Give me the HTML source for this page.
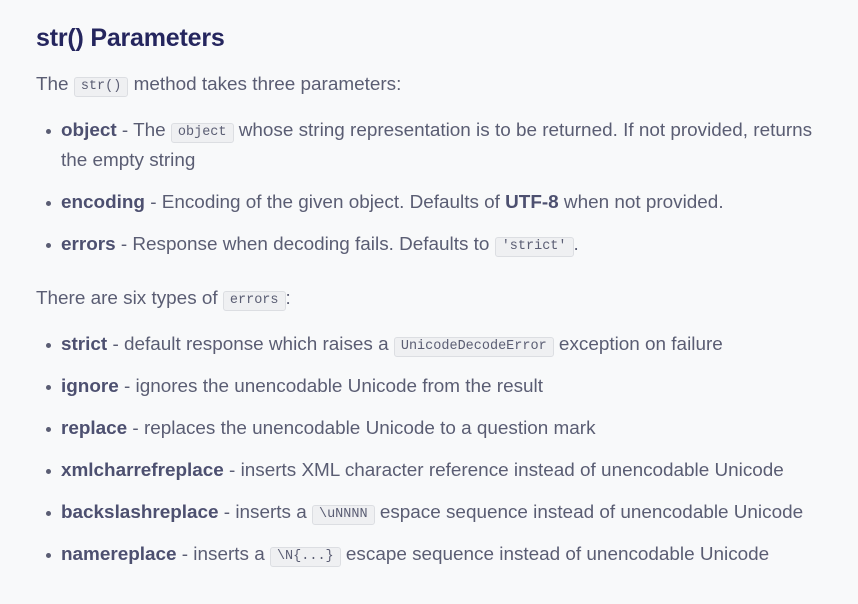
<!DOCTYPE html>
<html><head><meta charset="utf-8"><style>
html,body{margin:0;padding:0;background:#f8f9fa;width:858px;height:604px;overflow:hidden}
body{font-family:"Liberation Sans",sans-serif;color:#5a5d73;font-size:18.9px}
h2{position:absolute;left:36px;top:24px;margin:0;font-size:25px;color:#25265e;font-weight:bold;letter-spacing:-0.2px}
p,ul{margin:0;position:absolute;left:36px;width:800px}
ul{padding-left:25px;list-style:none;width:790px}
li{line-height:30px;height:30px;margin-bottom:12px;position:relative;white-space:nowrap}
li.two{height:60px}
li:before{content:"";position:absolute;left:-15px;top:13px;width:5px;height:5px;border-radius:50%;background:#5a5d73}
b{color:#4d5070}
p{line-height:30px}
code{font-family:"Liberation Mono",monospace;font-size:13.5px;line-height:18px;display:inline-block;vertical-align:1px;background:#eff0f2;border:1px solid #dcdee2;border-radius:3px;padding:0 6px;color:#5a5d73}
</style></head><body>
<h2>str() Parameters</h2>
<p style="top:70px">The <code>str()</code> method takes three parameters:</p>
<ul style="top:116px">
<li class="two"><b>object</b> - The <code>object</code> whose string representation is to be returned. If not provided, returns<br>the empty string</li>
<li><b>encoding</b> - Encoding of the given object. Defaults of <b>UTF-8</b> when not provided.</li>
<li><b>errors</b> - Response when decoding fails. Defaults to <code>'strict'</code>.</li>
</ul>
<p style="top:284px">There are six types of <code>errors</code>:</p>
<ul style="top:330px">
<li><b>strict</b> - default response which raises a <code>UnicodeDecodeError</code> exception on failure</li>
<li><b>ignore</b> - ignores the unencodable Unicode from the result</li>
<li><b>replace</b> - replaces the unencodable Unicode to a question mark</li>
<li><b>xmlcharrefreplace</b> - inserts XML character reference instead of unencodable Unicode</li>
<li><b>backslashreplace</b> - inserts a <code>\uNNNN</code> espace sequence instead of unencodable Unicode</li>
<li><b>namereplace</b> - inserts a <code>\N{...}</code> escape sequence instead of unencodable Unicode</li>
</ul>
</body></html>
